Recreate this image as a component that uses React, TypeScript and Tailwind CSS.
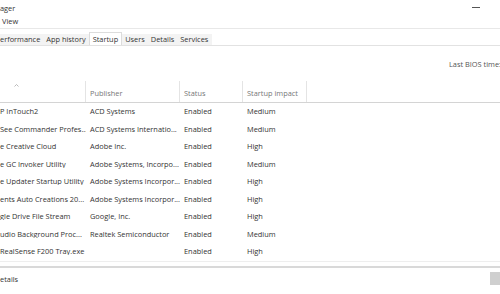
const rows = [
  { name: "P InTouch2", publisher: "ACD Systems", status: "Enabled", impact: "Medium" },
  { name: "See Commander Profes...", publisher: "ACD Systems Internatio...", status: "Enabled", impact: "Medium" },
  { name: "e Creative Cloud", publisher: "Adobe Inc.", status: "Enabled", impact: "High" },
  { name: "e GC Invoker Utility", publisher: "Adobe Systems, Incorpo...", status: "Enabled", impact: "Medium" },
  { name: "e Updater Startup Utility", publisher: "Adobe Systems Incorpor...", status: "Enabled", impact: "High" },
  { name: "ents Auto Creations 20...", publisher: "Adobe Systems Incorpor...", status: "Enabled", impact: "High" },
  { name: "gle Drive File Stream", publisher: "Google, Inc.", status: "Enabled", impact: "High" },
  { name: "udio Background Proc...", publisher: "Realtek Semiconductor", status: "Enabled", impact: "Medium" },
  { name: "RealSense F200 Tray.exe", publisher: "", status: "Enabled", impact: "High" },
];

const tabs = ["erformance", "App history", "Startup", "Users", "Details", "Services"];

export default function App() {
  return (
    <div className="w-[500px] h-[294px] bg-white overflow-hidden flex flex-col text-[#333] font-['Open_Sans',sans-serif] text-[7.4px] leading-none">
      {/* title bar */}
      <div className="h-[15px] flex items-center justify-between">
        <span className="pt-[2px]">ager</span>
        <span className="w-[8px] h-px bg-[#555] mr-[20px]" />
      </div>
      {/* menu */}
      <div className="h-[14px] flex items-center pl-[2px] border-b border-[#e8e8e8]">View</div>
      {/* tabs */}
      <div className="h-[17px] pt-[5px] border-b border-[#e2e2e2] flex items-stretch">
        <div className="flex bg-[#f3f3f3] -ml-[3px] pr-[1px]">
          {tabs.map((t) => (
            <div
              key={t}
              className={
                t === "Startup"
                  ? "bg-white px-[3px] flex items-center border-x border-t border-[#dcdcdc] -mt-[2px] pt-[2px]"
                  : "px-[3px] flex items-center pt-[1px]"
              }
            >
              {t}
            </div>
          ))}
        </div>
      </div>
      {/* last bios */}
      <div className="h-[35px] flex items-center justify-end text-[#555] pt-[2px]">
        <span className="-mr-[1px] whitespace-nowrap">Last BIOS time:</span>
      </div>
      {/* header */}
      <div className="h-[22px] flex border-b border-[#d4d4d4] text-[#777]">
        <div className="w-[86px] relative border-r border-[#e4e4e4]">
          <svg className="absolute left-[14px] top-[3px]" width="5" height="3" viewBox="0 0 5 3">
            <path d="M0.5 2.5 L2.5 0.5 L4.5 2.5" stroke="#aaa" strokeWidth="0.8" fill="none" />
          </svg>
        </div>
        <div className="w-[94px] border-r border-[#e4e4e4] flex items-end pb-[5px] pl-[4px]">Publisher</div>
        <div className="w-[63px] border-r border-[#e4e4e4] flex items-end pb-[5px] pl-[4px]">Status</div>
        <div className="w-[64px] border-r border-[#e4e4e4] flex items-end pb-[5px] pl-[4px]">Startup impact</div>
      </div>
      {/* rows */}
      <div className="flex flex-col border-b border-[#eeeeee]">
        {rows.map((r) => (
          <div key={r.name} className="h-[17.5px] flex items-center">
            <div className="w-[86px] whitespace-nowrap overflow-hidden">{r.name}</div>
            <div className="w-[94px] pl-[4px] whitespace-nowrap">{r.publisher}</div>
            <div className="w-[63px] pl-[4px] whitespace-nowrap">{r.status}</div>
            <div className="w-[64px] pl-[4px] whitespace-nowrap">{r.impact}</div>
          </div>
        ))}
      </div>
      <div className="h-[4px]" />
      <div className="h-[2px] bg-[#d9d9d9]" />
      {/* footer */}
      <div className="flex-1 flex items-center justify-between">
        <span className="-mt-[2px]">etails</span>
        <span className="w-[10px] h-[13px] bg-[#cfcfcf] -mt-[4px]" />
      </div>
    </div>
  );
}
